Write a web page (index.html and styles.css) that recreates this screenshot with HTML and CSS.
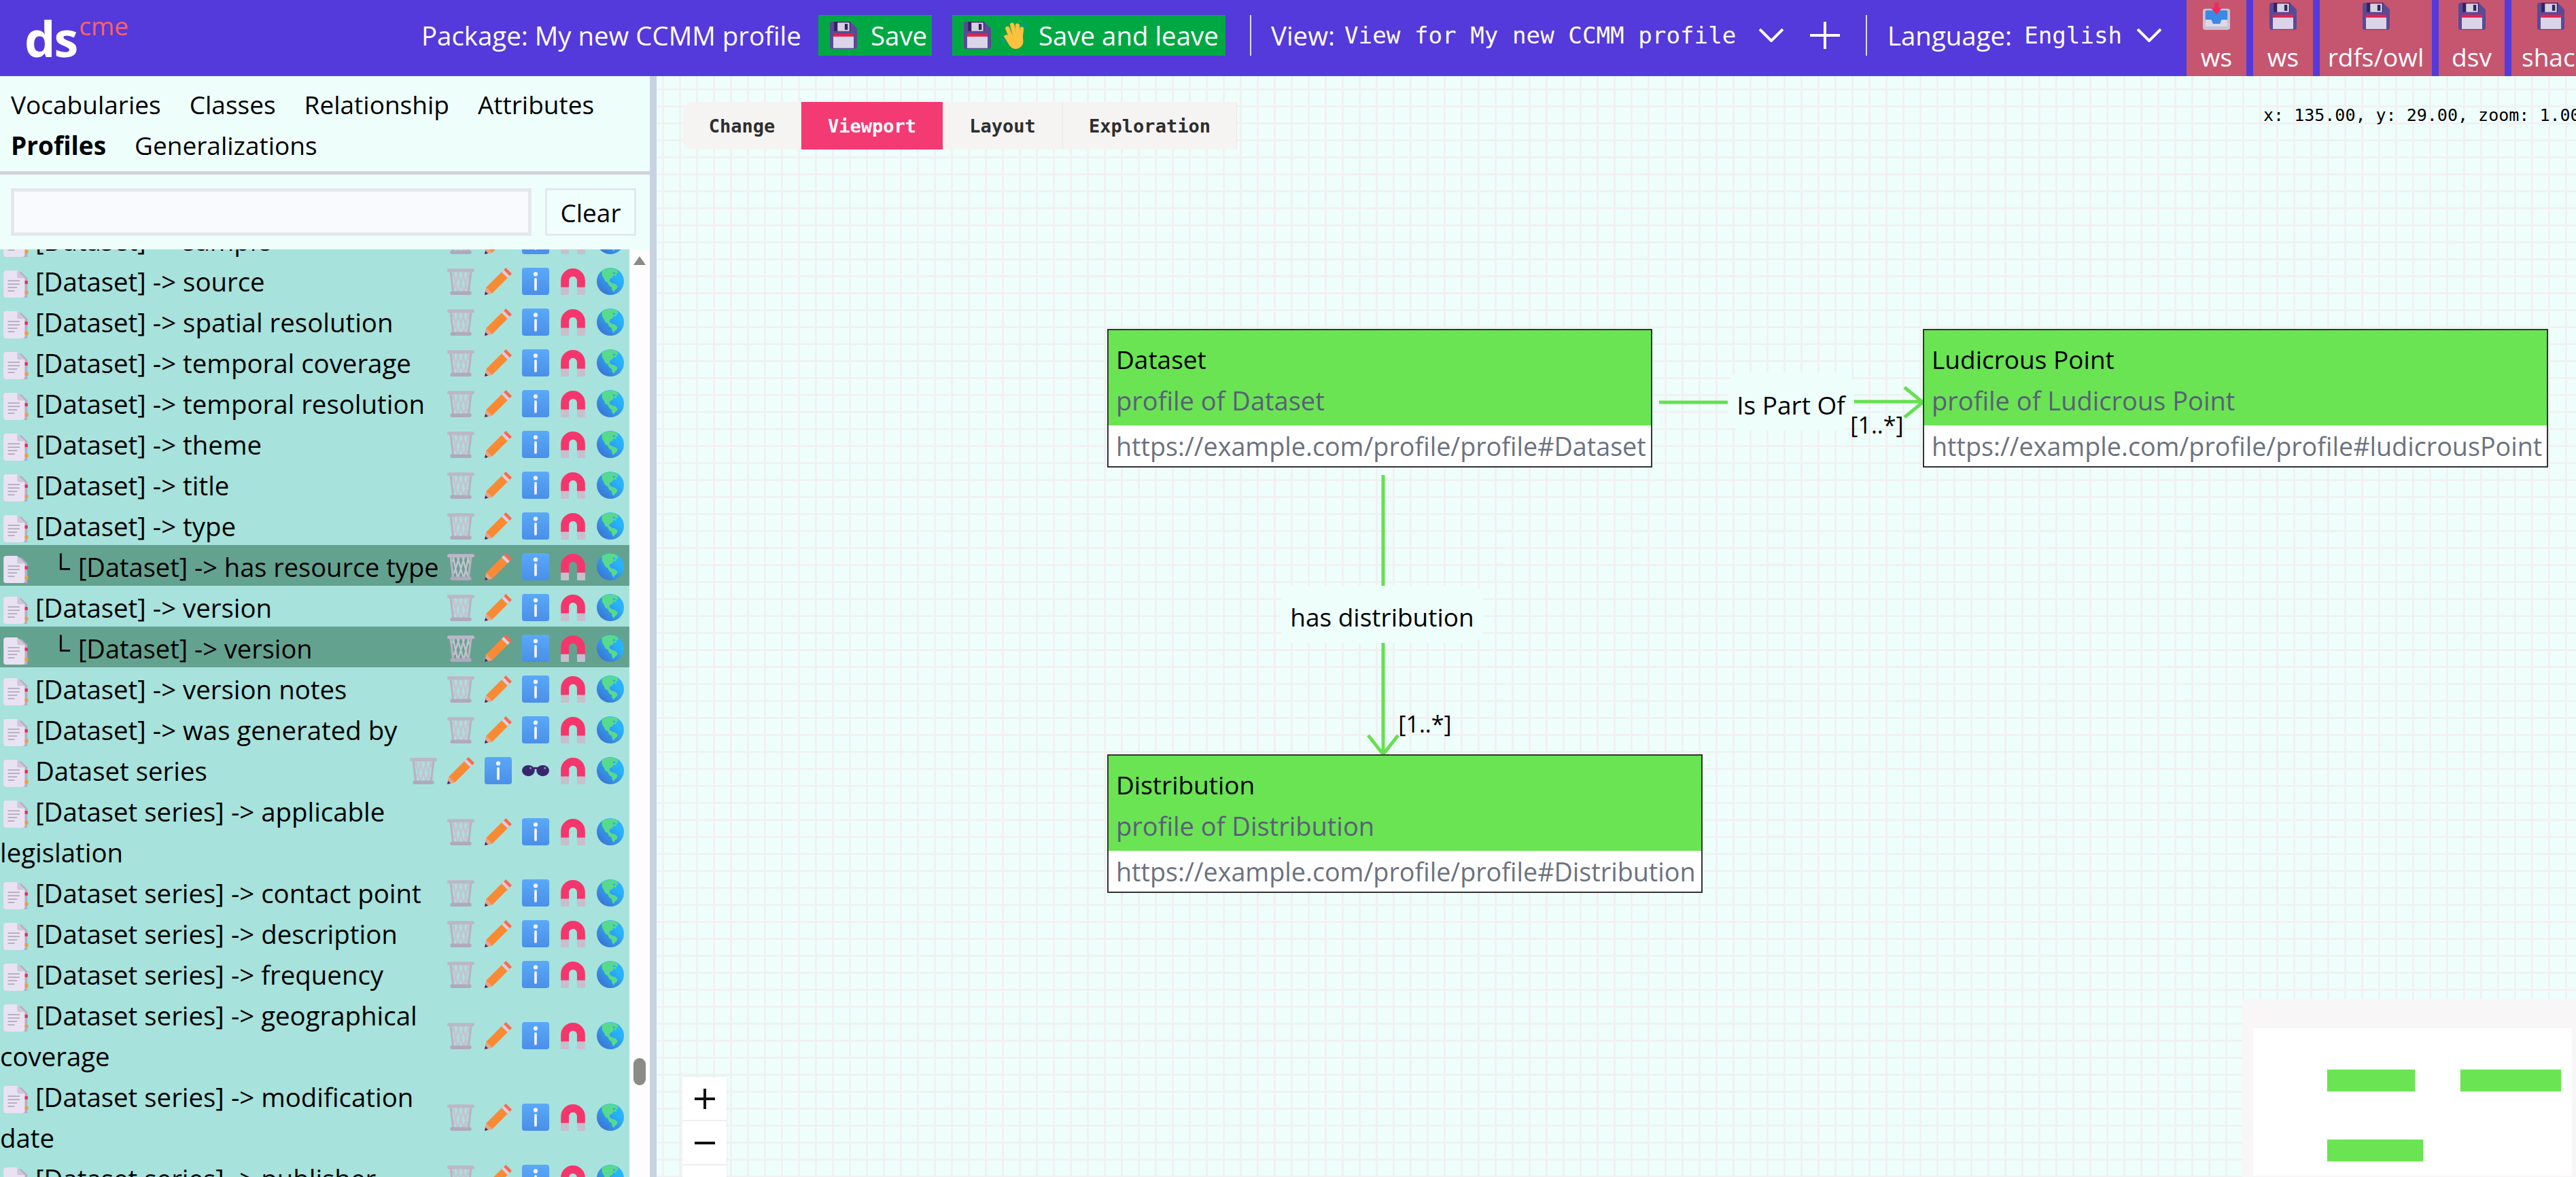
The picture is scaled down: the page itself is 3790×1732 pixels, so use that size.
FILE: index.html
```html
<!DOCTYPE html>
<html lang="en">
<head>
  <meta charset="UTF-8">
  <title>Dataspecer - CME</title>
  <link rel="stylesheet" href="styles.css">
</head>
<body>
  <svg class="sprites" xmlns="http://www.w3.org/2000/svg">
    <defs>
      <linearGradient id="g-info" x1="0" y1="0" x2="0" y2="1"><stop offset="0" stop-color="#5aa9f8"/><stop offset="1" stop-color="#4a8fe8"/></linearGradient>
      <linearGradient id="g-globe" x1="1" y1="0" x2="0" y2="1"><stop offset="0.3" stop-color="#27b4ff"/><stop offset="1" stop-color="#4166c8"/></linearGradient>
    </defs>
    <symbol id="i-save" viewBox="0 0 32 32">
      <path d="M0 3a3 3 0 0 1 3-3h21l8 8v21a3 3 0 0 1-3 3H3a3 3 0 0 1-3-3z" fill="#5a4a96"/>
      <rect x="5" y="0" width="19" height="11" fill="#352060"/>
      <rect x="9" y="1" width="14" height="10" fill="#d5d1e2"/>
      <rect x="17.5" y="2.5" width="3.5" height="7" fill="#352060"/>
      <rect x="4" y="14" width="24" height="3.5" fill="#e3234c"/>
      <rect x="4" y="17.5" width="24" height="13.5" fill="#dcd5ea"/>
    </symbol>
    <symbol id="i-inbox" viewBox="0 0 32 32">
      <rect x="0" y="7" width="32" height="25" rx="3" fill="#c8c4d2"/>
      <rect x="3" y="9" width="26" height="16" rx="1.5" fill="#3a8ae6"/>
      <path d="M3 20h7l2 5h8l2-5h7v8H3z" fill="#dcd8e6"/>
      <path d="M13.500 0h5v6h4l-6.500 8-6.500-8h4z" fill="#ee2a5c"/>
    </symbol>
    <symbol id="i-hand" viewBox="0 0 32 32">
      <g fill="#fbc13f">
        <rect x="7" y="5" width="5" height="16" rx="2.500" transform="rotate(-22 9.500 13)"/>
        <rect x="12" y="1" width="5" height="17" rx="2.500" transform="rotate(-14 14.500 10)"/>
        <rect x="17" y="2" width="5" height="17" rx="2.500" transform="rotate(-4 19.500 10)"/>
        <rect x="21.500" y="6" width="4.500" height="14" rx="2.200" transform="rotate(6 23.700 13)"/>
        <path d="M8 16l17-2 1 9c0 5-4 9-9 9-4 0-7-3-9-7l-5-8 3-2z"/>
      </g>
      <path d="M24 2c2 1 3.500 3 4 5.500M26.500 1c1.500 1 3 3 3.500 5M2 19c.5 2 2 4 3.500 5M.5 21c.5 1.500 1.500 3 3 4.500" fill="none" stroke="#1c8fb5" stroke-width="1"/>
    </symbol>
    <symbol id="i-doc" viewBox="0 0 32 32">
      <path d="M7 2h15l7 7v23H7z" fill="#b6aec2"/>
      <path d="M1 3a3 3 0 0 1 3-3h13l9 9v20a3 3 0 0 1-3 3H4a3 3 0 0 1-3-3z" fill="#e9e2f2"/>
      <path d="M17 0l9 9h-7a2 2 0 0 1-2-2z" fill="#cfc6da"/>
      <path d="M6 12h14M6 16h14M6 20h11M6 24h8" stroke="#b3aabd" stroke-width="1.400"/>
      <rect x="26" y="12" width="3.500" height="4" rx="1" fill="#ee2a5c"/>
      <rect x="26" y="24" width="4" height="4" rx="1" fill="#f59a3c"/>
    </symbol>
    <symbol id="i-trash" viewBox="0 0 32 32">
      <path d="M7 5l5 23M12 5l7 23M18 5l6 22M24 5l2 7M25 5l-5 23M20 5l-7 23M14 5l-6 19M8 5l-2 5" fill="none" stroke="#c6c1d0" stroke-width="2"/>
      <path d="M4 4l3 25M28 4l-3 25" fill="none" stroke="#b8b2c2" stroke-width="2.500"/>
      <rect x="0" y="1" width="32" height="4" rx="2" fill="#bcb7c6"/>
      <rect x="3.500" y="27.500" width="25" height="4.500" rx="2" fill="#b0a9bc"/>
    </symbol>
    <symbol id="i-pencil" viewBox="0 0 32 32">
      <path d="M0 32l2-9L22 3l7 7L9 30z" fill="#f98a34"/>
      <path d="M20 5l3-3 7 7-3 3z" fill="#d7d0e2"/>
      <path d="M25 0l7 7-2.500 2.500-7-7z" fill="#fb6a4d"/>
      <path d="M0 32l2-9 7 7z" fill="#e8a48c"/>
      <path d="M0 32l1-4 3 3z" fill="#3a2a70"/>
    </symbol>
    <symbol id="i-info" viewBox="0 0 32 32">
      <rect width="32" height="32" rx="3" fill="url(#g-info)"/>
      <circle cx="16" cy="7.500" r="2.500" fill="#f6f2ff"/>
      <rect x="14.500" y="12" width="3" height="15" rx="1.500" fill="#f6f2ff"/>
    </symbol>
    <symbol id="i-magnet" viewBox="0 0 32 32">
      <path d="M6.500 23V15a9.500 9.500 0 0 1 19 0v8" fill="none" stroke="#f4366c" stroke-width="9.500"/>
      <rect x="1.700" y="23" width="9.500" height="9" fill="#c7bfce"/>
      <rect x="20.800" y="23" width="9.500" height="9" fill="#c7bfce"/>
    </symbol>
    <symbol id="i-globe" viewBox="0 0 32 32">
      <circle cx="16" cy="16" r="16" fill="url(#g-globe)"/>
      <path d="M6 3.500C11 0 19-.5 24 2.500l1.500 3-2 1-1 3-3-.5-1 2.500-3 1.500-.5 3 3 2 3.500 1 3 2.500-1 3-2.500 2-1 2.500-2-3-.5-3-3-2-1.500-3.500-3-1.500-1.500-3.500-2-3z" fill="#58da8c"/>
      <path d="M19 5l3 .5-.5 2-2.500-.5z" fill="#2ea8f0"/>
    </symbol>
    <symbol id="i-shades" viewBox="0 0 32 32">
      <ellipse cx="7.500" cy="16" rx="7.500" ry="6.500" fill="#38266e"/>
      <ellipse cx="24.500" cy="16" rx="7.500" ry="6.500" fill="#38266e"/>
      <path d="M13 12.500c2-1 4-1 6 0v2.500c-2-1-4-1-6 0z" fill="#38266e"/>
      <circle cx="10" cy="13" r="1.200" fill="#9a8cc4"/>
      <circle cx="27" cy="13" r="1.200" fill="#9a8cc4"/>
    </symbol>
  </svg>

  <header class="topbar">
    <div class="logo"><span class="logo-ds">ds</span><span class="logo-cme">cme</span></div>
    <div class="package">Package: My new CCMM profile</div>
    <button class="save-btn save-short"><svg class="ico"><use href="#i-save"/></svg><span>Save</span></button>
    <button class="save-btn save-long"><svg class="ico"><use href="#i-save"/></svg><svg class="ico"><use href="#i-hand"/></svg><span>Save and leave</span></button>
    <div class="bar-sep"></div>
    <div class="bar-select view-select">View:<span class="mono">View for My new CCMM profile</span><svg class="chevron" viewBox="0 0 38 20"><path d="M2 1l17 17L36 1"/></svg></div>
    <svg class="plus" viewBox="0 0 44 40"><path d="M0 20h44M22 0v40"/></svg>
    <div class="bar-sep"></div>
    <div class="bar-select lang-select">Language:<span class="mono">English</span><svg class="chevron" viewBox="0 0 38 20"><path d="M2 1l17 17L36 1"/></svg></div>
    <div class="exports">
      <div class="export w-ws"><svg class="ico"><use href="#i-inbox"/></svg><span>ws</span></div>
      <div class="export w-ws"><svg class="ico"><use href="#i-save"/></svg><span>ws</span></div>
      <div class="export w-rdfs"><svg class="ico"><use href="#i-save"/></svg><span>rdfs/owl</span></div>
      <div class="export w-dsv"><svg class="ico"><use href="#i-save"/></svg><span>dsv</span></div>
      <div class="export w-shacl"><svg class="ico"><use href="#i-save"/></svg><span>shacl</span></div>
    </div>
  </header>

  <main class="workspace">
    <aside class="sidebar">
      <nav class="tabs">
        <span>Vocabularies</span><span>Classes</span><span>Relationship</span><span>Attributes</span>
        <span class="tab-active">Profiles</span><span>Generalizations</span>
      </nav>
      <div class="search">
        <input class="search-input" type="text">
        <button class="search-clear">Clear</button>
      </div>
      <div class="list-wrap">
        <div class="list">
          <div class="row"><div class="row-label"><svg class="ico doc"><use href="#i-doc"/></svg>[Dataset] -&gt; sample</div><div class="actions"><svg class="ico"><use href="#i-trash"/></svg><svg class="ico"><use href="#i-pencil"/></svg><svg class="ico"><use href="#i-info"/></svg><svg class="ico"><use href="#i-magnet"/></svg><svg class="ico"><use href="#i-globe"/></svg></div></div>
          <div class="row"><div class="row-label"><svg class="ico doc"><use href="#i-doc"/></svg>[Dataset] -&gt; source</div><div class="actions"><svg class="ico"><use href="#i-trash"/></svg><svg class="ico"><use href="#i-pencil"/></svg><svg class="ico"><use href="#i-info"/></svg><svg class="ico"><use href="#i-magnet"/></svg><svg class="ico"><use href="#i-globe"/></svg></div></div>
          <div class="row"><div class="row-label"><svg class="ico doc"><use href="#i-doc"/></svg>[Dataset] -&gt; spatial resolution</div><div class="actions"><svg class="ico"><use href="#i-trash"/></svg><svg class="ico"><use href="#i-pencil"/></svg><svg class="ico"><use href="#i-info"/></svg><svg class="ico"><use href="#i-magnet"/></svg><svg class="ico"><use href="#i-globe"/></svg></div></div>
          <div class="row"><div class="row-label"><svg class="ico doc"><use href="#i-doc"/></svg>[Dataset] -&gt; temporal coverage</div><div class="actions"><svg class="ico"><use href="#i-trash"/></svg><svg class="ico"><use href="#i-pencil"/></svg><svg class="ico"><use href="#i-info"/></svg><svg class="ico"><use href="#i-magnet"/></svg><svg class="ico"><use href="#i-globe"/></svg></div></div>
          <div class="row"><div class="row-label"><svg class="ico doc"><use href="#i-doc"/></svg>[Dataset] -&gt; temporal resolution</div><div class="actions"><svg class="ico"><use href="#i-trash"/></svg><svg class="ico"><use href="#i-pencil"/></svg><svg class="ico"><use href="#i-info"/></svg><svg class="ico"><use href="#i-magnet"/></svg><svg class="ico"><use href="#i-globe"/></svg></div></div>
          <div class="row"><div class="row-label"><svg class="ico doc"><use href="#i-doc"/></svg>[Dataset] -&gt; theme</div><div class="actions"><svg class="ico"><use href="#i-trash"/></svg><svg class="ico"><use href="#i-pencil"/></svg><svg class="ico"><use href="#i-info"/></svg><svg class="ico"><use href="#i-magnet"/></svg><svg class="ico"><use href="#i-globe"/></svg></div></div>
          <div class="row"><div class="row-label"><svg class="ico doc"><use href="#i-doc"/></svg>[Dataset] -&gt; title</div><div class="actions"><svg class="ico"><use href="#i-trash"/></svg><svg class="ico"><use href="#i-pencil"/></svg><svg class="ico"><use href="#i-info"/></svg><svg class="ico"><use href="#i-magnet"/></svg><svg class="ico"><use href="#i-globe"/></svg></div></div>
          <div class="row"><div class="row-label"><svg class="ico doc"><use href="#i-doc"/></svg>[Dataset] -&gt; type</div><div class="actions"><svg class="ico"><use href="#i-trash"/></svg><svg class="ico"><use href="#i-pencil"/></svg><svg class="ico"><use href="#i-info"/></svg><svg class="ico"><use href="#i-magnet"/></svg><svg class="ico"><use href="#i-globe"/></svg></div></div>
          <div class="row row-child"><div class="row-label"><svg class="ico doc"><use href="#i-doc"/></svg><span class="branch">└</span>[Dataset] -&gt; has resource type</div><div class="actions"><svg class="ico"><use href="#i-trash"/></svg><svg class="ico"><use href="#i-pencil"/></svg><svg class="ico"><use href="#i-info"/></svg><svg class="ico"><use href="#i-magnet"/></svg><svg class="ico"><use href="#i-globe"/></svg></div></div>
          <div class="row"><div class="row-label"><svg class="ico doc"><use href="#i-doc"/></svg>[Dataset] -&gt; version</div><div class="actions"><svg class="ico"><use href="#i-trash"/></svg><svg class="ico"><use href="#i-pencil"/></svg><svg class="ico"><use href="#i-info"/></svg><svg class="ico"><use href="#i-magnet"/></svg><svg class="ico"><use href="#i-globe"/></svg></div></div>
          <div class="row row-child"><div class="row-label"><svg class="ico doc"><use href="#i-doc"/></svg><span class="branch">└</span>[Dataset] -&gt; version</div><div class="actions"><svg class="ico"><use href="#i-trash"/></svg><svg class="ico"><use href="#i-pencil"/></svg><svg class="ico"><use href="#i-info"/></svg><svg class="ico"><use href="#i-magnet"/></svg><svg class="ico"><use href="#i-globe"/></svg></div></div>
          <div class="row"><div class="row-label"><svg class="ico doc"><use href="#i-doc"/></svg>[Dataset] -&gt; version notes</div><div class="actions"><svg class="ico"><use href="#i-trash"/></svg><svg class="ico"><use href="#i-pencil"/></svg><svg class="ico"><use href="#i-info"/></svg><svg class="ico"><use href="#i-magnet"/></svg><svg class="ico"><use href="#i-globe"/></svg></div></div>
          <div class="row"><div class="row-label"><svg class="ico doc"><use href="#i-doc"/></svg>[Dataset] -&gt; was generated by</div><div class="actions"><svg class="ico"><use href="#i-trash"/></svg><svg class="ico"><use href="#i-pencil"/></svg><svg class="ico"><use href="#i-info"/></svg><svg class="ico"><use href="#i-magnet"/></svg><svg class="ico"><use href="#i-globe"/></svg></div></div>
          <div class="row"><div class="row-label"><svg class="ico doc"><use href="#i-doc"/></svg>Dataset series</div><div class="actions"><svg class="ico"><use href="#i-trash"/></svg><svg class="ico"><use href="#i-pencil"/></svg><svg class="ico"><use href="#i-info"/></svg><svg class="ico"><use href="#i-shades"/></svg><svg class="ico"><use href="#i-magnet"/></svg><svg class="ico"><use href="#i-globe"/></svg></div></div>
          <div class="row"><div class="row-label"><svg class="ico doc"><use href="#i-doc"/></svg>[Dataset series] -&gt; applicable legislation</div><div class="actions"><svg class="ico"><use href="#i-trash"/></svg><svg class="ico"><use href="#i-pencil"/></svg><svg class="ico"><use href="#i-info"/></svg><svg class="ico"><use href="#i-magnet"/></svg><svg class="ico"><use href="#i-globe"/></svg></div></div>
          <div class="row"><div class="row-label"><svg class="ico doc"><use href="#i-doc"/></svg>[Dataset series] -&gt; contact point</div><div class="actions"><svg class="ico"><use href="#i-trash"/></svg><svg class="ico"><use href="#i-pencil"/></svg><svg class="ico"><use href="#i-info"/></svg><svg class="ico"><use href="#i-magnet"/></svg><svg class="ico"><use href="#i-globe"/></svg></div></div>
          <div class="row"><div class="row-label"><svg class="ico doc"><use href="#i-doc"/></svg>[Dataset series] -&gt; description</div><div class="actions"><svg class="ico"><use href="#i-trash"/></svg><svg class="ico"><use href="#i-pencil"/></svg><svg class="ico"><use href="#i-info"/></svg><svg class="ico"><use href="#i-magnet"/></svg><svg class="ico"><use href="#i-globe"/></svg></div></div>
          <div class="row"><div class="row-label"><svg class="ico doc"><use href="#i-doc"/></svg>[Dataset series] -&gt; frequency</div><div class="actions"><svg class="ico"><use href="#i-trash"/></svg><svg class="ico"><use href="#i-pencil"/></svg><svg class="ico"><use href="#i-info"/></svg><svg class="ico"><use href="#i-magnet"/></svg><svg class="ico"><use href="#i-globe"/></svg></div></div>
          <div class="row"><div class="row-label"><svg class="ico doc"><use href="#i-doc"/></svg>[Dataset series] -&gt; geographical coverage</div><div class="actions"><svg class="ico"><use href="#i-trash"/></svg><svg class="ico"><use href="#i-pencil"/></svg><svg class="ico"><use href="#i-info"/></svg><svg class="ico"><use href="#i-magnet"/></svg><svg class="ico"><use href="#i-globe"/></svg></div></div>
          <div class="row"><div class="row-label"><svg class="ico doc"><use href="#i-doc"/></svg>[Dataset series] -&gt; modification date</div><div class="actions"><svg class="ico"><use href="#i-trash"/></svg><svg class="ico"><use href="#i-pencil"/></svg><svg class="ico"><use href="#i-info"/></svg><svg class="ico"><use href="#i-magnet"/></svg><svg class="ico"><use href="#i-globe"/></svg></div></div>
          <div class="row"><div class="row-label"><svg class="ico doc"><use href="#i-doc"/></svg>[Dataset series] -&gt; publisher</div><div class="actions"><svg class="ico"><use href="#i-trash"/></svg><svg class="ico"><use href="#i-pencil"/></svg><svg class="ico"><use href="#i-info"/></svg><svg class="ico"><use href="#i-magnet"/></svg><svg class="ico"><use href="#i-globe"/></svg></div></div>
        </div>
        <div class="scroll">
          <div class="scroll-up"></div>
          <div class="scroll-thumb"></div>
        </div>
      </div>
    </aside>

    <section class="canvas">
      <div class="toolbar">
        <button class="tool tool-change">Change</button>
        <button class="tool tool-viewport tool-active">Viewport</button>
        <button class="tool tool-layout">Layout</button>
        <button class="tool tool-explore">Exploration</button>
      </div>
      <div class="coords">x: 135.00, y: 29.00, zoom: 1.00</div>

      <svg class="edges">
        <path d="M1475 480H1576M1762 479H1863M1836 458L1863 480L1836 502"/>
        <path d="M1069 587V750M1069 834V997M1047 970L1069 998L1091 970"/>
      </svg>

      <div class="edge-label label-part">Is Part Of</div>
      <div class="edge-label label-card-a">[1..*]</div>
      <div class="edge-label label-dist">has distribution</div>
      <div class="edge-label label-card-b">[1..*]</div>

      <div class="node node-dataset">
        <div class="node-head"><div>Dataset</div><div class="node-sub">profile of Dataset</div></div>
        <div class="node-iri">https://example.com/profile/profile#Dataset</div>
      </div>
      <div class="node node-point">
        <div class="node-head"><div>Ludicrous Point</div><div class="node-sub">profile of Ludicrous Point</div></div>
        <div class="node-iri">https://example.com/profile/profile#ludicrousPoint</div>
      </div>
      <div class="node node-dist">
        <div class="node-head"><div>Distribution</div><div class="node-sub">profile of Distribution</div></div>
        <div class="node-iri">https://example.com/profile/profile#Distribution</div>
      </div>

      <div class="zoom-ctl">
        <div class="zoom-btn"><svg viewBox="0 0 30 30"><path d="M0 15h30M15 0v30"/></svg></div>
        <div class="zoom-btn"><svg viewBox="0 0 30 30"><path d="M0 15h30"/></svg></div>
        <div class="zoom-btn"></div>
      </div>

      <div class="minimap">
        <div class="minimap-view">
          <div class="mini-node mini-a"></div>
          <div class="mini-node mini-b"></div>
          <div class="mini-node mini-c"></div>
        </div>
      </div>
    </section>
  </main>
</body>
</html>
```

FILE: styles.css
```css
* { box-sizing: border-box; }
html, body { height: 100%; }
body {
  margin: 0; height: 100vh; overflow: hidden; display: flex; flex-direction: column;
  font-family: 'Open Sans', 'Noto Sans', sans-serif; font-size: 37px; color: #000; background: #eefffb;
}
button, input { font: inherit; color: inherit; }
.sprites { position: absolute; width: 0; height: 0; }
.ico { width: 40px; height: 40px; flex: none; display: block; }
.mono { font-family: 'DejaVu Sans Mono', 'Liberation Mono', monospace; font-size: 34.2px; }

/* top bar */
.topbar { height: 112px; flex: none; display: flex; align-items: center; padding-bottom: 8px; background: #5439db; color: #fff; font-size: 38.4px; overflow: hidden; }
.logo { width: 620px; height: 112px; padding-left: 36px; flex: none; display: flex; align-self: flex-start; }
.logo-ds { font-size: 72px; font-weight: 700; line-height: 112px; letter-spacing: -2px; }
.logo-cme { font-size: 37px; line-height: 40px; margin-top: 18px; margin-left: 3px; color: #ff6161; }
.package { width: 584px; flex: none; white-space: nowrap; }
.save-btn { height: 60px; flex: none; display: flex; align-items: center; gap: 15px; padding: 0 0 0 17px; border: 0; background: #00a844; color: #fff; white-space: nowrap; }
.save-short { width: 167px; margin-right: 30px; gap: 20px; }
.save-long { width: 402px; }
.bar-sep { width: 2px; height: 60px; flex: none; background: #dcd8f6; }
.save-long + .bar-sep { margin-left: 36px; }
.bar-select { display: flex; align-items: center; flex: none; white-space: nowrap; }
.view-select { width: 755px; margin-left: 29px; }
.view-select .mono { margin-left: 14px; }
.lang-select { width: 404px; margin-left: 30px; }
.lang-select .mono { margin-left: 18px; }
.chevron { width: 38px; height: 20px; margin-left: auto; flex: none; }
.chevron path, .plus path { fill: none; stroke: #fff; stroke-width: 4; }
.plus { width: 44px; height: 40px; flex: none; margin: 0 38px; }
.exports { display: flex; gap: 10px; height: 112px; flex: none; margin-left: 36px; align-self: flex-start; }
.export { height: 112px; display: flex; flex-direction: column; align-items: center; padding-top: 4px; background: #c6556f; }
.export span { line-height: 60px; margin-top: 10px; font-size: 37px; white-space: nowrap; }
.w-ws { width: 88px; }
.w-rdfs { width: 165px; }
.w-dsv { width: 97px; }
.w-shacl { width: 120px; align-items: flex-start; padding-left: 15px; }
.w-shacl .ico { margin-left: 23px; }

/* left panel */
.workspace { flex: 1; min-height: 0; display: flex; }
.sidebar { width: 966px; flex: none; display: flex; flex-direction: column; border-right: 10px solid #c8d3e0; overflow: hidden; }
.tabs { height: 145px; flex: none; display: flex; flex-wrap: wrap; align-content: flex-start; gap: 0 42px; padding: 12px 16px 0; border-bottom: 5px solid #d2d2da; line-height: 60px; }
.tab-active { font-weight: 700; }
.search { height: 110px; flex: none; display: flex; gap: 20px; padding: 20px 20px 20px 16px; }
.search-input { width: 766px; height: 70px; border: 5px solid #e4e8ec; background: #f8fafe; outline: none; }
.search-clear { flex: 1; height: 70px; padding: 0; border: 3px solid #e4e8ec; background: #f1fffc; }
.list-wrap { flex: 1; min-height: 0; display: flex; }
.list { flex: 1; min-width: 0; overflow: hidden; background: #a7e2dc; font-size: 38.4px; }
.row { display: flex; min-height: 60px; line-height: 60px; }
.row:first-child { margin-top: -45px; }
.row-child { background: #64a290; }
.row-child .row-label { white-space: nowrap; font-size: 38px; }
.row-label { flex: 1; min-width: 0; padding-top: 2px; margin-bottom: -2px; }
.doc { display: inline-block; vertical-align: -9px; margin: 0 8px 0 4px; }
.branch { margin: 0 12px 0 24px; }
.actions { flex: none; display: flex; align-items: center; gap: 15px; padding: 4px 8px 0 8px; }
.scroll { width: 30px; flex: none; background: #fdfcff; }
.scroll-up { width: 0; height: 0; margin: 10px auto 0; border: 9px solid transparent; border-top: 0; border-bottom: 13px solid #8a8c86; }
.scroll-thumb { width: 18px; height: 40px; margin: 1167px 0 0 6px; border-radius: 9px; background: #8a8c86; }

/* diagram */
.canvas {
  flex: 1; min-width: 0; position: relative; overflow: hidden; background-color: #eefffb;
  background-image: linear-gradient(#f1f1f2 3px, transparent 3px), linear-gradient(90deg, #f1f1f2 3px, transparent 3px);
  background-size: 25px 25px; background-position: 8px 18px;
}
.toolbar { position: absolute; left: 39px; top: 38px; display: flex; height: 70px; border-radius: 14px 0 0 14px; overflow: hidden; background: #f5f4f3; }
.tool { border: 0; padding: 0; height: 70px; background: #f5f4f3; color: #2e2e2e; font-family: 'DejaVu Sans Mono', 'Liberation Mono', monospace; font-size: 27px; font-weight: 700; border-right: 1px solid #ebe9e8; }
.tool-active { background: #f33a73; color: #fff; border-right: 0; }
.tool-change { width: 174px; }
.tool-viewport { width: 208px; }
.tool-layout { width: 177px; }
.tool-explore { width: 256px; }
.coords { position: absolute; left: 2364px; top: 43px; white-space: nowrap; line-height: 30px; font-family: 'DejaVu Sans Mono', 'Liberation Mono', monospace; font-size: 25px; }
.edges { position: absolute; left: 0; top: 0; width: 100%; height: 100%; }
.edges path { fill: none; stroke: #66e050; stroke-width: 5; }
.edge-label { position: absolute; display: flex; align-items: center; justify-content: center; border-radius: 20px; background: #eefffb; white-space: nowrap; }
.label-part { left: 1576px; top: 436px; width: 186px; height: 85px; padding-top: 10px; }
.label-card-a { left: 1758px; top: 493px; width: 75px; height: 40px; font-size: 34px; background: none; }
.label-dist { left: 919px; top: 750px; width: 297px; height: 84px; padding-top: 6px; }
.label-card-b { left: 1093px; top: 918px; width: 75px; height: 70px; font-size: 34px; background: none; }
.node { position: absolute; height: 204px; border: 2px solid #333; background: #fff; }
.node-head { height: 140px; padding: 13px 11px 0; background: #6ae453; line-height: 60px; }
.node-sub { color: #5a5f78; font-size: 38px; }
.node-iri { height: 60px; padding: 0 11px; line-height: 61px; font-size: 37.7px; color: #6b7280; white-space: nowrap; overflow: hidden; }
.node-dataset { left: 663px; top: 372px; width: 802px; }
.node-point { left: 1863px; top: 372px; width: 920px; }
.node-dist { left: 663px; top: 998px; width: 876px; }
.zoom-ctl { position: absolute; left: 38px; top: 1473px; width: 65px; bottom: 0; background: #fff; box-shadow: 0 0 4px rgba(0, 0, 0, 0.08); }
.zoom-btn { height: 65px; display: flex; align-items: center; justify-content: center; border-bottom: 2px solid #eee; }
.zoom-btn svg { width: 30px; height: 30px; }
.zoom-btn path { fill: none; stroke: #111; stroke-width: 4; }
.minimap { position: absolute; right: 0; bottom: 0; width: 491px; height: 262px; padding: 43px 6px 2px 16px; background: #f8f6f6; }
.minimap-view { position: relative; height: 100%; background: #fff; }
.mini-node { position: absolute; height: 34px; background: #6ae453; border: 1px solid #e6fbe0; }
.mini-a { left: 108px; top: 60px; width: 131px; }
.mini-b { left: 304px; top: 60px; width: 150px; }
.mini-c { left: 108px; top: 163px; width: 143px; }
```
